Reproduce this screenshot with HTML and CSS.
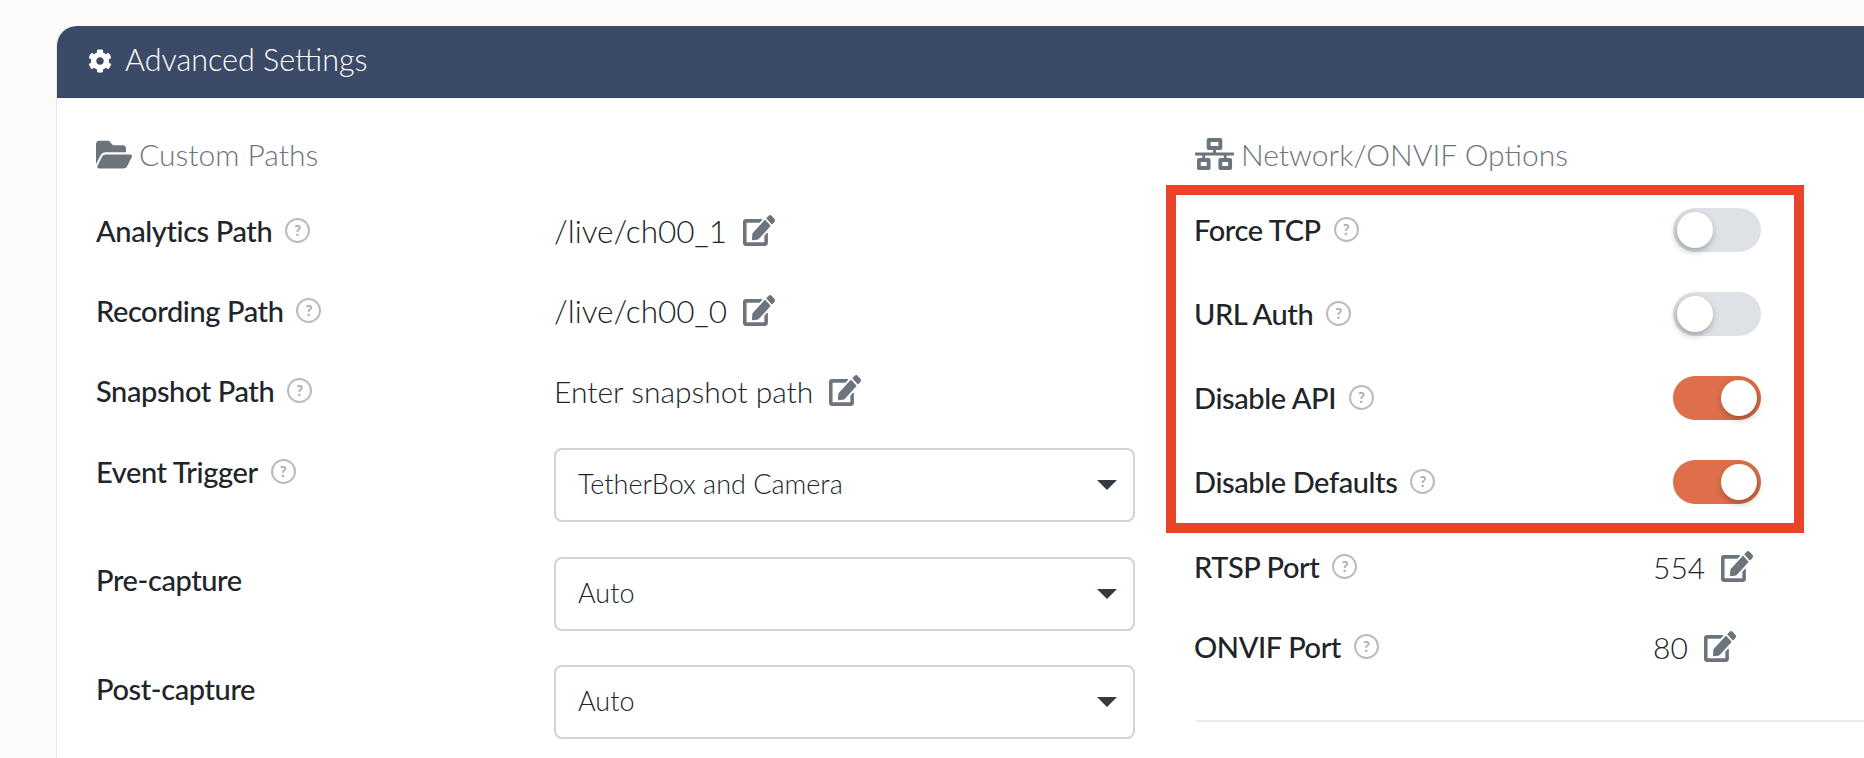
FILE: index.html
```html
<!DOCTYPE html>
<html lang="en">
<head>
    <meta charset="UTF-8">
    <title>Advanced Settings</title>
    <link rel="stylesheet" href="styles.css">
</head>
<body>
    <svg class="sprite">
        <symbol id="edit" viewBox="0 0 576 512" preserveAspectRatio="none"><path d="M402.6 83.2l90.2 90.2c3.8 3.8 3.8 10 0 13.8L274.4 405.6l-92.8 10.3c-12.4 1.4-22.9-9.1-21.5-21.5l10.3-92.8L388.8 83.2c3.8-3.8 10-3.8 13.8 0zm162-22.9l-48.8-48.8c-15.2-15.2-39.9-15.2-55.2 0l-35.4 35.4c-3.8 3.8-3.8 10 0 13.8l90.2 90.2c3.8 3.8 10 3.8 13.8 0l35.4-35.4c15.2-15.3 15.2-40 0-55.2zM384 346.2V448H64V128h229.8c3.2 0 6.2-1.3 8.5-3.5l40-40c7.6-7.6 2.2-20.5-8.5-20.5H48C21.5 64 0 85.5 0 112v352c0 26.5 21.5 48 48 48h352c26.5 0 48-21.5 48-48V306.2c0-10.7-12.9-16-20.5-8.5l-40 40c-2.2 2.3-3.5 5.3-3.5 8.5z"/></symbol>
    </svg>
    <div class="card">
        <div class="card-header">
            <svg class="icon-cog" viewBox="0 0 512 512"><path d="M487.4 315.7l-42.6-24.6c4.3-23.2 4.3-47 0-70.2l42.6-24.6c4.9-2.8 7.1-8.6 5.5-14-11.1-35.6-30-67.8-54.7-94.6-3.8-4.1-10-5.1-14.8-2.3L380.8 110c-17.9-15.4-38.5-27.3-60.8-35.1V25.8c0-5.6-3.9-10.5-9.4-11.7-36.7-8.2-74.3-7.8-109.2 0-5.5 1.2-9.4 6.1-9.4 11.7V75c-22.2 7.9-42.8 19.8-60.8 35.1L88.7 85.5c-4.9-2.8-11-1.9-14.8 2.3-24.7 26.7-43.6 58.9-54.7 94.6-1.7 5.4.6 11.2 5.5 14L67.3 221c-4.3 23.2-4.3 47 0 70.2l-42.6 24.6c-4.9 2.8-7.1 8.6-5.5 14 11.1 35.6 30 67.8 54.7 94.6 3.8 4.1 10 5.1 14.8 2.3l42.6-24.6c17.9 15.4 38.5 27.3 60.8 35.1v49.2c0 5.6 3.9 10.5 9.4 11.7 36.7 8.2 74.3 7.8 109.2 0 5.5-1.2 9.4-6.1 9.4-11.7v-49.2c22.2-7.9 42.8-19.8 60.8-35.1l42.6 24.6c4.9 2.8 11 1.9 14.8-2.3 24.7-26.7 43.6-58.9 54.7-94.6 1.5-5.5-.7-11.3-5.6-14.1zM256 336c-44.1 0-80-35.9-80-80s35.9-80 80-80 80 35.9 80 80-35.9 80-80 80z"/></svg>
            <span class="card-title">Advanced Settings</span>
        </div>
        <div class="card-body">
            <div class="col-left">
                <h3 class="section-title">
                    <svg class="icon-folder" viewBox="0 0 576 512" preserveAspectRatio="none"><path d="M572.694 292.093L500.27 416.248A63.997 63.997 0 0 1 444.989 448H45.025c-18.523 0-30.064-20.093-20.731-36.093l72.424-124.155A64 64 0 0 1 152 256h399.964c18.523 0 30.064 20.093 20.73 36.093zM152 224h328v-48c0-26.51-21.49-48-48-48H272l-64-64H48C21.49 64 0 85.49 0 112v278.046l69.077-118.418C86.214 242.25 117.989 224 152 224z"/></svg>
                    Custom Paths
                </h3>
                <div class="path-rows">
                    <div class="row">
                        <div class="label">Analytics Path <span class="help">?</span></div>
                        <div class="value value-path">/live/ch00_1 <svg class="icon-edit"><use href="#edit"/></svg></div>
                    </div>
                    <div class="row">
                        <div class="label">Recording Path <span class="help">?</span></div>
                        <div class="value value-path">/live/ch00_0 <svg class="icon-edit"><use href="#edit"/></svg></div>
                    </div>
                    <div class="row">
                        <div class="label">Snapshot Path <span class="help">?</span></div>
                        <div class="value">Enter snapshot path <svg class="icon-edit"><use href="#edit"/></svg></div>
                    </div>
                </div>
                <div class="select-rows">
                    <div class="select-row">
                        <div class="label">Event Trigger <span class="help">?</span></div>
                        <div class="select-box"><select><option>TetherBox and Camera</option></select></div>
                    </div>
                    <div class="select-row">
                        <div class="label">Pre-capture</div>
                        <div class="select-box"><select><option>Auto</option></select></div>
                    </div>
                    <div class="select-row">
                        <div class="label">Post-capture</div>
                        <div class="select-box"><select><option>Auto</option></select></div>
                    </div>
                </div>
            </div>
            <div class="col-right">
                <h3 class="section-title">
                    <svg class="icon-network" viewBox="0 0 640 512" preserveAspectRatio="none"><path d="M640 264v-16c0-8.84-7.16-16-16-16H344v-40h72c17.67 0 32-14.33 32-32V32c0-17.67-14.33-32-32-32H224c-17.67 0-32 14.33-32 32v128c0 17.67 14.33 32 32 32h72v40H16c-8.84 0-16 7.16-16 16v16c0 8.84 7.16 16 16 16h104v40H64c-17.67 0-32 14.33-32 32v128c0 17.67 14.33 32 32 32h160c17.67 0 32-14.33 32-32V352c0-17.67-14.33-32-32-32h-56v-40h304v40h-56c-17.67 0-32 14.33-32 32v128c0 17.67 14.33 32 32 32h160c17.67 0 32-14.33 32-32V352c0-17.67-14.33-32-32-32h-56v-40h104c8.84 0 16-7.16 16-16zM256 128V64h128v64H256zm-64 320H96v-64h96v64zm352 0h-96v-64h96v64z"/></svg>
                    Network/ONVIF Options
                </h3>
                <div class="toggle-rows">
                    <div class="highlight"></div>
                    <div class="option-row">
                        <div class="label">Force TCP <span class="help">?</span></div>
                        <span class="toggle"></span>
                    </div>
                    <div class="option-row">
                        <div class="label">URL Auth <span class="help">?</span></div>
                        <span class="toggle"></span>
                    </div>
                    <div class="option-row">
                        <div class="label">Disable API <span class="help">?</span></div>
                        <span class="toggle on"></span>
                    </div>
                    <div class="option-row">
                        <div class="label">Disable Defaults <span class="help">?</span></div>
                        <span class="toggle on"></span>
                    </div>
                </div>
                <div class="port-rows">
                    <div class="port-row">
                        <div class="label">RTSP Port <span class="help">?</span></div>
                        <div class="value">554 <svg class="icon-edit"><use href="#edit"/></svg></div>
                    </div>
                    <div class="port-row">
                        <div class="label">ONVIF Port <span class="help">?</span></div>
                        <div class="value">80 <svg class="icon-edit"><use href="#edit"/></svg></div>
                    </div>
                </div>
                <hr class="divider">
            </div>
        </div>
    </div>
</body>
</html>
```

FILE: styles.css
```css
html, body {
    height: 100%;
    overflow: hidden;
}
body {
    font-family: "Lato", "Open Sans", sans-serif;
    background-color: #fdfbf9;
    color: #212529;
    margin: 0;
    padding: 26px 0 0 56px;
    box-sizing: border-box;
}
.sprite {
    display: none;
}
.card {
    width: 1860px;
    background-color: #fff;
    border: 1px solid #e8e9ef;
    border-top: none;
    border-radius: 20px 20px 0 0;
}
.card-header {
    display: flex;
    align-items: center;
    height: 72px;
    padding-left: 31px;
    background-color: #3b4a66;
    border-bottom: 1px solid #33415a;
    border-radius: 20px 20px 0 0;
    color: #fff;
    font-size: 30.5px;
    font-weight: 300;
    box-sizing: border-box;
}
.card-title {
    padding-bottom: 6px;
}
.icon-cog {
    width: 24px;
    height: 24px;
    margin-right: 13px;
    margin-top: -2px;
    fill: #fff;
}
.card-body {
    display: flex;
    padding: 36px 0 0 39px;
}
.col-left {
    width: 1039px;
    margin-right: 60px;
}
.col-right {
    width: 720px;
}
.section-title {
    display: flex;
    align-items: center;
    height: 40px;
    margin: 0;
    color: #6c757d;
    font-size: 30px;
    font-weight: 300;
}
.section-title svg {
    fill: #6c757d;
    margin-right: 7px;
}
.icon-folder {
    width: 36px;
    height: 37px;
}
.icon-network {
    width: 39px;
    height: 32px;
}
.label {
    display: flex;
    align-items: center;
    gap: 13px;
    padding-bottom: 2px;
    font-size: 29px;
    font-weight: 500;
    letter-spacing: -0.4px;
}
.col-right .label {
    margin-left: -1px;
}
.help {
    display: inline-block;
    width: 25px;
    height: 25px;
    border: 2px solid #bbb;
    border-radius: 50%;
    box-sizing: border-box;
    color: #aaa;
    font-size: 15px;
    font-weight: 700;
    letter-spacing: 0;
    line-height: 21px;
    text-align: center;
}
.value {
    display: flex;
    align-items: center;
    gap: 16px;
    font-size: 30px;
    font-weight: 300;
}
.value-path {
    font-size: 31.5px;
}
.icon-edit {
    width: 32px;
    height: 31px;
    margin-top: -2px;
    fill: #6c757d;
}
.path-rows {
    margin-top: 17px;
    margin-bottom: 17px;
}
.row {
    display: grid;
    grid-template-columns: 458px 1fr;
    align-items: center;
    height: 80px;
}
.select-row {
    display: grid;
    grid-template-columns: 458px 581px;
    height: 74px;
    margin-bottom: 34.5px;
}
.select-row .label {
    height: 46px;
}
.select-box {
    position: relative;
}
.select-box select {
    width: 100%;
    height: 74px;
    padding: 0 60px 3px 22px;
    appearance: none;
    background-color: #fff;
    border: 2px solid #ced4da;
    border-radius: 8px;
    color: #212529;
    font-family: inherit;
    font-size: 27px;
    font-weight: 300;
}
/* flechita del select */
.select-box::after {
    content: "";
    position: absolute;
    top: 32px;
    right: 18px;
    border-top: 10px solid #343a40;
    border-left: 10px solid transparent;
    border-right: 10px solid transparent;
}
.toggle-rows {
    position: relative;
    width: 566px;
    margin-top: 14px;
}
/* recuadro rojo encima de las opciones */
.highlight {
    position: absolute;
    top: -3px;
    left: -29px;
    width: 638px;
    height: 348px;
    border: 10px solid #e9432a;
    box-sizing: border-box;
    pointer-events: none;
}
.option-row {
    display: flex;
    justify-content: space-between;
    align-items: center;
    height: 84px;
}
.toggle {
    display: flex;
    align-items: center;
    width: 88px;
    height: 44px;
    padding: 0 4px;
    background-color: #dee2e6;
    border-radius: 22px;
    box-sizing: border-box;
}
.toggle::after {
    content: "";
    width: 36px;
    height: 36px;
    background-color: #fff;
    border-radius: 50%;
    box-shadow: -1px 3px 7px rgba(0, 0, 0, 0.3);
}
.toggle.on {
    justify-content: flex-end;
    background-color: #de6f4a;
}
.toggle.on::after {
    box-shadow: 1px 3px 7px rgba(0, 0, 0, 0.3);
}
.port-rows {
    margin-top: 3px;
}
.port-row {
    display: grid;
    grid-template-columns: 458px 108px;
    align-items: center;
    width: 566px;
    height: 80px;
}
.divider {
    margin: 33px 0 0;
    border: none;
    border-top: 2px solid #e9ecef;
}
```
